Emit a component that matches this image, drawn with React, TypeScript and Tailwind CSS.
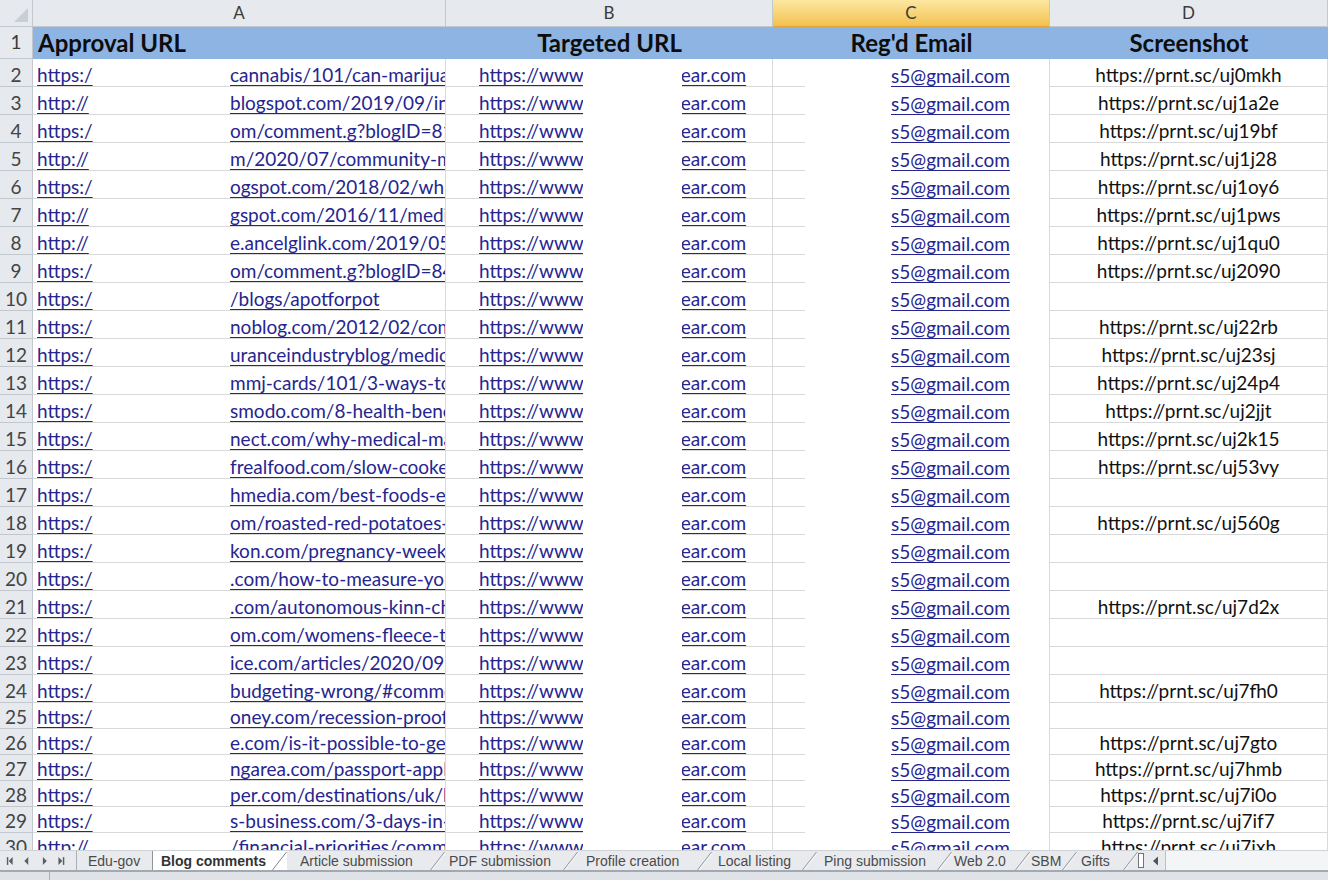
import React from "react";

const data: [string, string, string][] = [
  ["https:/", "cannabis/101/can-marijuana-help", "uj0mkh"],
  ["http://", "blogspot.com/2019/09/in-the-news", "uj1a2e"],
  ["https:/", "om/comment.g?blogID=8123456", "uj19bf"],
  ["http://", "m/2020/07/community-medical", "uj1j28"],
  ["https:/", "ogspot.com/2018/02/while-you", "uj1oy6"],
  ["http://", "gspot.com/2016/11/medical-use", "uj1pws"],
  ["http://", "e.ancelglink.com/2019/05/post", "uj1qu0"],
  ["https:/", "om/comment.g?blogID=8456123", "uj2090"],
  ["https:/", "/blogs/apotforpot", ""],
  ["https:/", "noblog.com/2012/02/comments", "uj22rb"],
  ["https:/", "uranceindustryblog/medical", "uj23sj"],
  ["https:/", "mmj-cards/101/3-ways-to-get", "uj24p4"],
  ["https:/", "smodo.com/8-health-benefits", "uj2jjt"],
  ["https:/", "nect.com/why-medical-marijuana", "uj2k15"],
  ["https:/", "frealfood.com/slow-cooker-recipe", "uj53vy"],
  ["https:/", "hmedia.com/best-foods-eat", ""],
  ["https:/", "om/roasted-red-potatoes-recipe", "uj560g"],
  ["https:/", "kon.com/pregnancy-week-by-week", ""],
  ["https:/", ".com/how-to-measure-your-size", ""],
  ["https:/", ".com/autonomous-kinn-chair", "uj7d2x"],
  ["https:/", "om.com/womens-fleece-top", ""],
  ["https:/", "ice.com/articles/2020/09/post", ""],
  ["https:/", "budgeting-wrong/#comments", "uj7fh0"],
  ["https:/", "oney.com/recession-proof-jobs", ""],
  ["https:/", "e.com/is-it-possible-to-get-a", "uj7gto"],
  ["https:/", "ngarea.com/passport-application", "uj7hmb"],
  ["https:/", "per.com/destinations/uk/london", "uj7i0o"],
  ["https:/", "s-business.com/3-days-in-paris", "uj7if7"],
  ["http://", "/financial-priorities/comments", "uj7ixh"],
];

const FONT = "[font-family:Lato,'Noto_Sans',sans-serif]";
const LINK =
  "text-[#25258f] underline decoration-[1px] underline-offset-[3px]";

function NavIcons() {
  return (
    <div className="flex items-center w-[77px] h-full border-r border-[#a9afb7]">
      <svg width="78" height="20" viewBox="0 0 78 20">
        <g fill="#5a5f66">
          <rect x="7" y="6" width="1.5" height="8" />
          <polygon points="9,10 13,6 13,14" />
          <polygon points="25,10 29,6 29,14" />
          <polygon points="44,6 48,10 44,14" />
          <polygon points="60,6 64,10 60,14" />
          <rect x="64.5" y="6" width="1.5" height="8" />
        </g>
      </svg>
    </div>
  );
}

function Slant({ dark }: { dark?: boolean }) {
  return (
    <svg width="15" height="19" viewBox="0 0 15 19" className="shrink-0">
      <line x1="0.5" y1="19" x2="14.5" y2="1" stroke={dark ? "#7d848d" : "#9299a2"} strokeWidth="1" />
      <line x1="2" y1="19" x2="15.5" y2="2" stroke="#ffffff" strokeWidth="0.8" opacity="0.8" />
    </svg>
  );
}

const tabs: { label: string; w: number; pl: number; active?: boolean }[] = [
  { label: "Blog comments", w: 134, pl: 8, active: true },
  { label: "Article submission", w: 158, pl: 13 },
  { label: "PDF submission", w: 133, pl: 4 },
  { label: "Profile creation", w: 134, pl: 8 },
  { label: "Local listing", w: 105, pl: 6 },
  { label: "Ping submission", w: 135, pl: 7 },
  { label: "Web 2.0", w: 78, pl: 2 },
  { label: "SBM", w: 47, pl: 1 },
  { label: "Gifts", w: 61, pl: 4 },
];

function TabBar() {
  return (
    <div className="flex h-[20px] w-full bg-[#e8eaed] border-t border-[#cfd3d8] [font-family:'Liberation_Sans',Arial,sans-serif] text-[14px] text-[#4a4a4a] leading-[18px]">
      <NavIcons />
      <div className="flex items-center w-[76px] h-full border-r border-[#8f959d] pl-[11px]">
        Edu-gov
      </div>
      {tabs.map((t) => (
        <div
          key={t.label}
          className={
            "flex h-full shrink-0 " +
            (t.active ? "bg-white font-bold text-[#333]" : "")
          }
          style={{ width: t.w }}
        >
          <div className="flex-1 flex items-center whitespace-nowrap" style={{ paddingLeft: t.pl }}>
            {t.label}
          </div>
          <Slant dark={t.active} />
        </div>
      ))}
      <div className="flex items-center h-full w-[27px] shrink-0">
        <div className="w-[6px] h-[15px] border border-[#6f757c] bg-white" />
        <svg width="21" height="20" viewBox="0 0 21 20">
          <polygon points="9,10 14,5.5 14,14.5" fill="#4f545a" />
        </svg>
      </div>
      <div className="flex-1 h-full bg-[#f4f5f7] border-l border-[#b9bfc6]" />
    </div>
  );
}

function StatusBar() {
  return (
    <div className="flex h-[10px] w-full bg-[#dfe3e8] border-t-2 border-[#a3a9b1]">
      <div className="w-[50px] h-full border-r border-[#aab0b8]" />
    </div>
  );
}

function ColHeader() {
  const base =
    "flex items-center justify-center h-full border-r border-b border-[#c3c8cf] text-[17px] text-[#3b3b3b]";
  return (
    <div className={"flex h-[27px] shrink-0 " + FONT}>
      <div className="relative w-[33px] h-full bg-[#e6e9ed] border-r border-b border-[#c3c8cf]">
        <svg width="32" height="26" viewBox="0 0 32 26" className="absolute left-0 top-0">
          <polygon points="28,8 28,22 14,22" fill="#c9ced5" />
        </svg>
      </div>
      <div className={base + " w-[413px] bg-[#e6e9ed]"}>A</div>
      <div className={base + " w-[327px] bg-[#e6e9ed]"}>B</div>
      <div className={base + " w-[277px] bg-linear-to-b from-[#fce7a0] to-[#f3c14c] border-b-[#e0a63a]"}>C</div>
      <div className={base + " w-[278px] bg-[#e6e9ed]"}>D</div>
    </div>
  );
}

function TitleRow() {
  return (
    <div className={"flex h-[32px] shrink-0 " + FONT}>
      <div className="flex items-center justify-center w-[33px] h-full bg-[#e6e9ed] border-r border-b border-[#c3c8cf] text-[19px] text-[#3b3b3b]">
        1
      </div>
      <div className="flex h-full bg-[#8db4e2] text-[24px] font-bold text-[#0d0d0d] leading-none">
        <div className="w-[413px] flex items-center pl-[5px]">Approval URL</div>
        <div className="w-[327px] flex items-center justify-center">Targeted URL</div>
        <div className="w-[277px] flex items-center justify-center">Reg'd Email</div>
        <div className="w-[278px] flex items-center justify-center">Screenshot</div>
      </div>
    </div>
  );
}

function DataRow({ n, row }: { n: number; row: [string, string, string] }) {
  const h = n <= 24 ? "h-[28px]" : "h-[26px]";
  const grid = "border-[#d9d9d9]";
  return (
    <div className={"flex shrink-0 text-[19px] leading-[23px] " + h + " " + FONT}>
      <div className="flex items-end justify-center w-[33px] h-full bg-[#e6e9ed] border-r border-b border-[#c3c8cf] text-[19px] text-[#444]">
        {n}
      </div>
      {/* Column A */}
      <div className={"flex items-end w-[413px] h-full border-r border-b overflow-hidden whitespace-nowrap pl-[4px] " + grid}>
        <span className="w-[193px] shrink-0">
          <span className={LINK}>{row[0]}</span>
        </span>
        <span className={"shrink-0 " + LINK}>{row[1]}</span>
      </div>
      {/* Column B */}
      <div className={"flex w-[327px] h-full border-r " + grid}>
        <div className={"flex items-end w-[137px] h-full border-b pl-[33px] overflow-hidden whitespace-nowrap " + grid}>
          <span className={LINK}>https://www</span>
        </div>
        <div className="w-[99px] h-full bg-white" />
        <div className={"flex items-end flex-1 h-full border-b overflow-hidden whitespace-nowrap " + grid}>
          <span className={"-ml-[11px] " + LINK}>gear.com</span>
        </div>
      </div>
      {/* Column C */}
      <div className={"flex w-[277px] h-full border-r " + grid}>
        <div className={"w-[32px] h-full border-b " + grid} />
        <div className="flex items-end flex-1 h-full pl-[86px] whitespace-nowrap">
          <span className={LINK}>s5@gmail.com</span>
        </div>
      </div>
      {/* Column D */}
      <div className={"flex items-end justify-center w-[278px] h-full border-r border-b text-[#111] whitespace-nowrap " + grid}>
        {row[2] ? "https://prnt.sc/" + row[2] : ""}
      </div>
    </div>
  );
}

export default function App() {
  return (
    <div className="w-[1328px] h-[880px] overflow-hidden bg-white flex flex-col">
      <div className="h-[850px] overflow-hidden flex flex-col shrink-0">
        <ColHeader />
        <TitleRow />
        {data.map((r, i) => (
          <DataRow key={i} n={i + 2} row={r} />
        ))}
      </div>
      <TabBar />
      <StatusBar />
    </div>
  );
}
